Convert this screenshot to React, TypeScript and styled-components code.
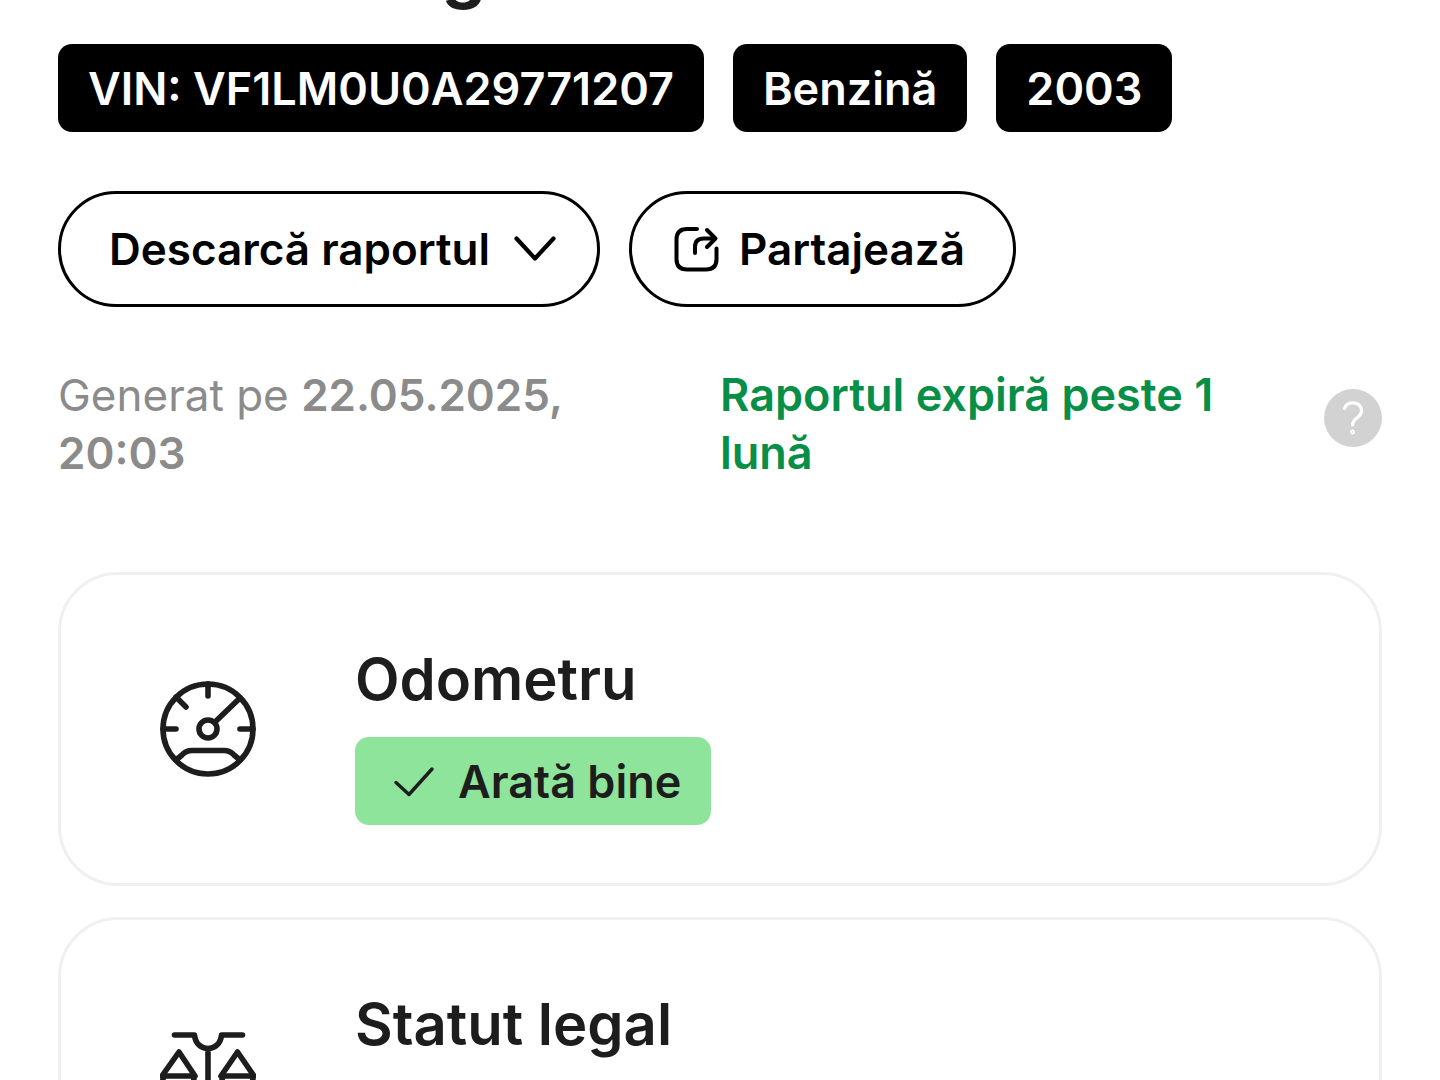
import React from "react";
import styled, { createGlobalStyle } from "styled-components";

const GlobalStyle = createGlobalStyle`
  *, *::before, *::after { box-sizing: border-box; }
  body {
    margin: 0;
    background: #fff;
    color: #1d1d1d;
    font-family: Inter, "Liberation Sans", sans-serif;
  }
  h1, h2, p { margin: 0; }
`;

const Page = styled.main`
  height: 100vh;
  overflow: hidden;
  padding: 0 58px;
`;

const Title = styled.h1`
  margin-top: -74px;
  padding-bottom: 30px;
  font-size: 70px;
  line-height: 88px;
  font-weight: 700;
`;

const Row = styled.div`
  display: flex;
  flex-wrap: wrap;
  gap: 29px;
  margin-bottom: 59px;
`;

const Tag = styled.span<{ $tone?: "dark" | "good" }>`
  display: inline-flex;
  align-items: center;
  height: 88px;
  padding: 0 30px;
  border-radius: 14px;
  font-size: 45px;
  font-weight: 600;
  white-space: pre;
  color: ${({ $tone }) => ($tone === "good" ? "#1d1d1d" : "#fff")};
  background: ${({ $tone }) => ($tone === "good" ? "#8ee49a" : "#000")};

  svg { margin: 0 23px 0 8px; }
`;

const PillButton = styled.button<{ $wide?: boolean }>`
  display: inline-flex;
  align-items: center;
  gap: ${({ $wide }) => ($wide ? "24px" : "20px")};
  height: 116px;
  padding: 0 ${({ $wide }) => ($wide ? "41px 0 48px" : "48px 0 42px")};
  border: 3px solid #000;
  border-radius: 58px;
  background: #fff;
  color: #000;
  font: inherit;
  font-size: 44px;
  font-weight: 600;
  cursor: pointer;
`;

const Meta = styled.div`
  display: grid;
  grid-template-columns: 1fr 1fr;
  margin-bottom: 90px;
  font-size: 44px;
  line-height: 58px;
`;

const Generated = styled.p`
  padding-right: 120px;
  color: #8b8b8b;
  strong { font-weight: 600; }
`;

const Expiry = styled.div`
  display: flex;
  justify-content: space-between;
  align-items: flex-start;
  gap: 60px;
  color: #078f48;
  font-weight: 600;
  font-size: 45px;
`;

const HelpButton = styled.button`
  flex: none;
  display: flex;
  margin-top: 23px;
  padding: 0;
  border: 0;
  border-radius: 50%;
  background: #d2d2d2;
  color: #fff;
  cursor: pointer;
`;

const Cards = styled.div`
  display: flex;
  flex-direction: column;
  gap: 31px;
`;

const Card = styled.section`
  display: flex;
  align-items: center;
  gap: 99px;
  padding: 58px 99px;
  border: 3px solid #f0f0f0;
  border-radius: 60px;
`;

const CardBody = styled.div`
  display: flex;
  flex-direction: column;
  align-items: flex-start;
  gap: 12px;
`;

const CardTitle = styled.h2`
  font-size: 58px;
  line-height: 92px;
  font-weight: 600;
`;

const Svg = styled.svg`
  display: block;
  flex: none;
  fill: none;
  stroke: currentColor;
  stroke-linecap: round;
  stroke-linejoin: round;
`;

const ChevronIcon = () => (
  <Svg width="42" height="28" viewBox="0 0 42 28" strokeWidth="4.2" aria-hidden="true">
    <path d="M2.5 3.5 21 23.5 39.5 3.5" />
  </Svg>
);

const ShareIcon = () => (
  <Svg width="45" height="46" viewBox="0 0 45 46" strokeWidth="4" aria-hidden="true">
    <path d="M23 3H13Q2.500 3 2.500 13.500V33Q2.500 43.500 13 43.500H32Q42.500 43.500 42.500 33V22.500" />
    <path d="M21 27V21Q21 12.500 29.500 12.500H41" />
    <path d="M33 4 41.500 12.500 33 21" />
  </Svg>
);

const HelpIcon = () => (
  <Svg width="58" height="58" viewBox="0 0 58 58" strokeWidth="3.200" aria-hidden="true">
    <path d="M20.500 19.500C22 11.500 37.500 11.500 37.500 22C37.500 28.500 28.500 29 28.500 36" />
    <circle cx="28.500" cy="43" r="0.800" />
  </Svg>
);

const CheckIcon = () => (
  <Svg width="42" height="32" viewBox="0 0 42 32" strokeWidth="3.400" aria-hidden="true">
    <path d="M3 17.500 16 29.500 39 4" />
  </Svg>
);

const GaugeIcon = () => (
  <Svg width="96" height="96" viewBox="0 0 96 96" strokeWidth="5.600" aria-hidden="true">
    <circle cx="48" cy="48" r="45" />
    <circle cx="48" cy="48" r="9" />
    <path d="M48 3V15M3 48H16M80 48H93M16 16 26 26M55 41 80 17" />
    <path d="M16 79 22 74Q26 69.500 32 69.500H64Q70 69.500 74 74L80 79" />
  </Svg>
);

const ScalesIcon = () => (
  <Svg width="96" height="96" viewBox="0 0 96 96" strokeWidth="5.600" aria-hidden="true">
    <path d="M14.500 9H34.500C36 27 60 27 61.500 9H82.500M48 23V88M30 90H66" />
    <path d="M2 50 19 26 35 50M61 50 77.500 26 94 50" />
    <path d="M4 50H33Q38 64 19 66Q-2 64 4 50ZM63 50H92Q97 64 77.500 66Q58 64 63 50Z" />
  </Svg>
);

const GoodBadge = () => (
  <Tag $tone="good">
    <CheckIcon />
    Arată bine
  </Tag>
);

export default function App() {
  return (
    <>
      <GlobalStyle />
      <Page lang="ro">
        <Title>Renault Megane</Title>
        <Row>
          <Tag>VIN: VF1LM0U0A29771207</Tag>
          <Tag>Benzină</Tag>
          <Tag>2003</Tag>
        </Row>
        <Row>
          <PillButton type="button" $wide>
            Descarcă raportul
            <ChevronIcon />
          </PillButton>
          <PillButton type="button">
            <ShareIcon />
            Partajează
          </PillButton>
        </Row>
        <Meta>
          <Generated>
            Generat pe <strong>22.05.2025, 20:03</strong>
          </Generated>
          <Expiry>
            <p>Raportul expiră peste 1 lună</p>
            <HelpButton type="button" aria-label="Ajutor">
              <HelpIcon />
            </HelpButton>
          </Expiry>
        </Meta>
        <Cards>
          <Card>
            <GaugeIcon />
            <CardBody>
              <CardTitle>Odometru</CardTitle>
              <GoodBadge />
            </CardBody>
          </Card>
          <Card>
            <ScalesIcon />
            <CardBody>
              <CardTitle>Statut legal</CardTitle>
              <GoodBadge />
            </CardBody>
          </Card>
        </Cards>
      </Page>
    </>
  );
}
